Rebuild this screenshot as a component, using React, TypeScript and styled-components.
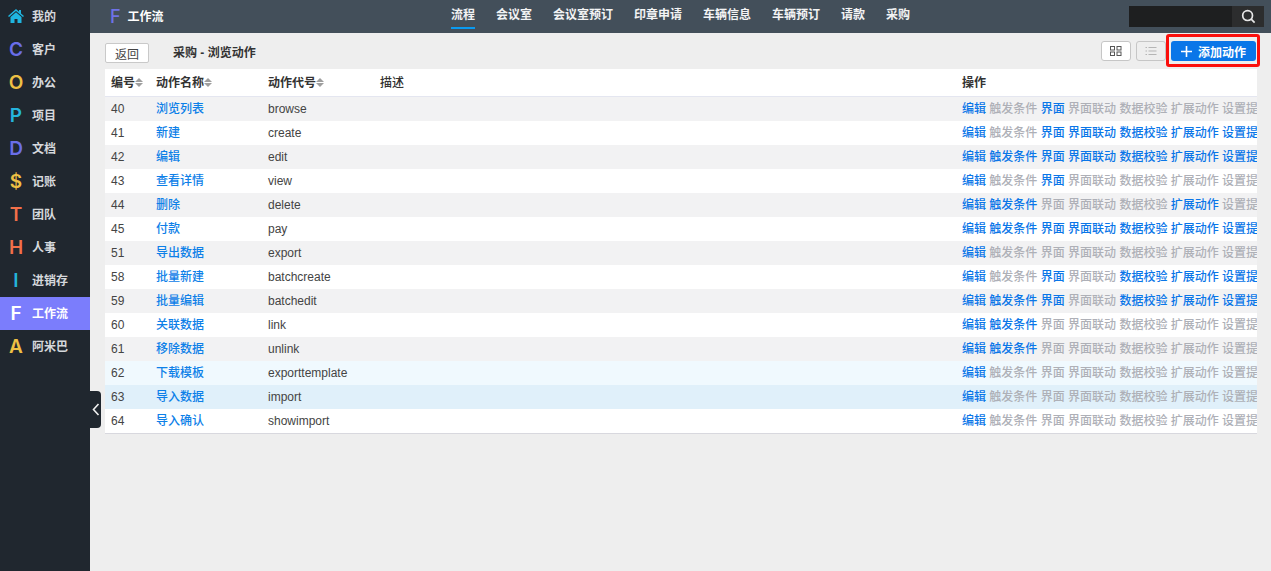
import React from 'react';
import styled, { createGlobalStyle } from 'styled-components';

const Global = createGlobalStyle`
  html, body { margin: 0; padding: 0; height: 100%; overflow: hidden; background: #eeeeee; }
  * { box-sizing: border-box; }
  body { font-family: "Liberation Sans", "Noto Sans CJK SC", sans-serif; font-size: 12px; color: #333; }
`;

const Page = styled.div`display: flex; width: 1271px; height: 571px; overflow: hidden;`;
const Sidebar = styled.aside`position: relative; width: 90px; flex: none; background: #20272f; display: flex; flex-direction: column;`;
const NavItem = styled.div<{ $active?: boolean }>`
  height: 33px; display: flex; align-items: center; padding-left: 8px; gap: 8px;
  font-weight: 700; color: ${p => (p.$active ? '#fff' : '#d5d8dc')};
  background: ${p => (p.$active ? '#7b7dfc' : 'transparent')};
`;
const NavLabel = styled.span`padding-bottom: 2px;`;
const NavIcon = styled.span<{ $color: string }>`
  width: 16px; font-size: 19px; line-height: 1; font-weight: 600;
  color: ${p => p.$color}; font-family: Inter, "Liberation Sans", sans-serif;
  display: flex; justify-content: center; padding-bottom: 1px;
`;
const Collapse = styled.div`
  position: absolute; left: 90px; top: 391px; width: 11px; height: 37px; background: #20272f;
  border-radius: 0 4px 4px 0; display: flex; align-items: center; justify-content: center;
`;
const Main = styled.main`flex: 1; min-width: 0; display: flex; flex-direction: column;`;
const TopBar = styled.header`height: 33px; flex: none; background: #434f5a; display: flex; align-items: center; position: relative;`;
const Brand = styled.div`display: flex; align-items: center; gap: 7px; padding-left: 20px; color: #fff; font-weight: 700;`;
const BrandMark = styled.span`color: #6f72e6; font-size: 18px; font-weight: 500; line-height: 1; font-family: Inter, sans-serif;`;
const BrandName = styled.span`padding-bottom: 2px;`;
const Tabs = styled.nav`position: absolute; left: 361px; top: 0; height: 33px; display: flex; gap: 21px;`;
const Tab = styled.span<{ $active?: boolean }>`
  height: 29px; line-height: 31px; color: #f2f3f4; font-weight: 700;
  border-bottom: 2px solid ${p => (p.$active ? '#0a9af0' : 'transparent')};
`;
const Search = styled.div`position: absolute; left: 1039px; top: 6px; display: flex; height: 21px;`;
const SearchInput = styled.div`width: 103px; background: #1e1f20;`;
const SearchBtn = styled.div`width: 32px; background: #2c2d2e; display: flex; align-items: center; justify-content: center;`;
const Content = styled.div`flex: 1; padding: 10px 14px 0 15px;`;
const Toolbar = styled.div`height: 26px; display: flex; align-items: flex-start;`;
const BackBtn = styled.button`
  width: 44px; height: 20px; padding: 0; background: #fff; border: 1px solid #c9c9c9; border-radius: 2px;
  color: #444; font: inherit;
`;
const Crumb = styled.div`margin-left: 24px; line-height: 20px; font-weight: 700; color: #333;`;
const Right = styled.div`margin: -2px 1px 0 auto; display: flex; align-items: center; gap: 5px;`;
const ViewBtn = styled.button<{ $off?: boolean }>`
  width: 30px; height: 20px; padding: 0; display: flex; align-items: center; justify-content: center;
  border: 1px solid #c6c6c6; border-radius: 3px; background: ${p => (p.$off ? '#eeeeee' : '#fff')};
`;
const AddBtn = styled.button`
  position: relative; width: 85px; height: 20px; padding: 0; border: 0; border-radius: 3px;
  background: #0a76e8; color: #fff; font: inherit; font-weight: 700;
  display: flex; align-items: center; justify-content: center; gap: 6px;
  &::after {
    content: ""; position: absolute; left: -5px; right: -4px; top: -7px; bottom: -6px;
    border: 3px solid #fb0f0c; border-radius: 3px;
  }
`;
const Table = styled.div`background: #fff; width: 1152px; box-shadow: 0 1px 0 #d8d8de; overflow: hidden;`;
const Grid = styled.div`display: grid; grid-template-columns: 45px 112px 112px 582px 1fr; align-items: center;`;
const Head = styled(Grid)`height: 28px; font-weight: 700; border-bottom: 1px solid #e4e6f0; color: #333;`;
const Row = styled(Grid)<{ $bg: string }>`height: 24px; background: ${p => p.$bg}; color: #444;`;
const Cell = styled.div`padding-left: 6px; white-space: nowrap; overflow: hidden;`;
const HeadCell = styled(Cell)`display: flex; align-items: center; padding-bottom: 2px;`;
const PlainHeadCell = styled(HeadCell)`font-weight: 500;`;
const NameCell = styled(Cell)`padding-bottom: 3px;`;
const Sort = styled.span`
  display: inline-flex; flex-direction: column; gap: 1px; margin-top: 1px;
  &::before, &::after { content: ""; width: 0; height: 0; border-left: 4px solid transparent; border-right: 4px solid transparent; }
  &::before { border-bottom: 4px solid #9e9e9e; }
  &::after { border-top: 4px solid #9e9e9e; }
`;
const NameLink = styled.a`color: #0d80e8; font-weight: 500;`;
const Actions = styled(Cell)`display: flex; gap: 3.33px; overflow: hidden; white-space: nowrap; padding-bottom: 3px; font-weight: 500;`;
const Action = styled.a<{ $on?: boolean }>`color: ${p => (p.$on ? '#0a76e8' : '#aeb0b7')}; flex: none;`;

const SearchIcon = () => (
  <svg width="15" height="15" viewBox="0 0 15 15" fill="none" stroke="#e8e8e8" strokeWidth="1.7"><circle cx="6.6" cy="6.6" r="4.9" /><path d="M10.2 10.2 13.6 13.6" /></svg>
);
const GridIcon = () => (
  <svg width="12" height="10" viewBox="0 0 12 10" fill="none" stroke="#555" strokeWidth="1"><rect x=".5" y=".5" width="4" height="3.5" /><rect x="7" y=".5" width="4" height="3.5" /><rect x=".5" y="6" width="4" height="3.5" /><rect x="7" y="6" width="4" height="3.5" /></svg>
);
const ListIcon = () => (
  <svg width="12" height="10" viewBox="0 0 12 10" fill="none" stroke="#b5b5b5" strokeWidth="1"><path d="M3.5 1.5H11.5M3.5 5H11.5M3.5 8.5H11.5M.5 1.5H2M.5 5H2M.5 8.5H2" /></svg>
);
const PlusIcon = () => (
  <svg width="11" height="11" viewBox="0 0 11 11" stroke="#fff" strokeWidth="1.6"><path d="M5.5 0V11M0 5.5H11" /></svg>
);
const HomeIcon = () => (
  <svg width="16" height="14" viewBox="0 0 16 14" fill="#1fb5e0"><path d="M8 0 0 7l1 1 7-6 7 6 1-1-3-2.6V1h-2v1.7L8 0Z" /><path d="M8 3.3 2.5 8v6h4V10h3v4h4V8L8 3.3Z" /></svg>
);
const Chevron = () => (
  <svg width="8" height="13" viewBox="0 0 8 13" fill="none" stroke="#f0f0f0" strokeWidth="1.6"><path d="M6.5 1 1.5 6.5 6.5 12" /></svg>
);

const navs: { icon: React.ReactNode; color: string; label: string; active?: boolean }[] = [
  { icon: <HomeIcon />, color: '#1fb5e0', label: '我的' },
  { icon: 'C', color: '#6a6ee8', label: '客户' },
  { icon: 'O', color: '#eec044', label: '办公' },
  { icon: 'P', color: '#25b3dc', label: '项目' },
  { icon: 'D', color: '#6a6ee8', label: '文档' },
  { icon: '$', color: '#eec044', label: '记账' },
  { icon: 'T', color: '#f2704a', label: '团队' },
  { icon: 'H', color: '#f2704a', label: '人事' },
  { icon: 'I', color: '#25b3dc', label: '进销存' },
  { icon: 'F', color: '#ffffff', label: '工作流', active: true },
  { icon: 'A', color: '#eec044', label: '阿米巴' },
];

const tabs = ['流程', '会议室', '会议室预订', '印章申请', '车辆信息', '车辆预订', '请款', '采购'];
const actionNames = ['触发条件', '界面', '界面联动', '数据校验', '扩展动作', '设置提醒'];

const rows: { id: number; name: string; code: string; flags: string; bg?: string }[] = [
  { id: 40, name: '浏览列表', code: 'browse', flags: '010000' },
  { id: 41, name: '新建', code: 'create', flags: '011111' },
  { id: 42, name: '编辑', code: 'edit', flags: '111111' },
  { id: 43, name: '查看详情', code: 'view', flags: '010000' },
  { id: 44, name: '删除', code: 'delete', flags: '100010' },
  { id: 45, name: '付款', code: 'pay', flags: '111111' },
  { id: 51, name: '导出数据', code: 'export', flags: '000000' },
  { id: 58, name: '批量新建', code: 'batchcreate', flags: '010111' },
  { id: 59, name: '批量编辑', code: 'batchedit', flags: '110111' },
  { id: 60, name: '关联数据', code: 'link', flags: '100000' },
  { id: 61, name: '移除数据', code: 'unlink', flags: '100000' },
  { id: 62, name: '下载模板', code: 'exporttemplate', flags: '000000', bg: '#f0f9fe' },
  { id: 63, name: '导入数据', code: 'import', flags: '000000', bg: '#e0f0fa' },
  { id: 64, name: '导入确认', code: 'showimport', flags: '000000', bg: '#ffffff' },
];

export default function App() {
  return (
    <Page>
      <Global />
      <Sidebar>
        {navs.map(n => (
          <NavItem key={n.label} $active={n.active}>
            <NavIcon $color={n.color}>{n.icon}</NavIcon>
            <NavLabel>{n.label}</NavLabel>
          </NavItem>
        ))}
        <Collapse><Chevron /></Collapse>
      </Sidebar>
      <Main>
        <TopBar>
          <Brand><BrandMark>F</BrandMark><BrandName>工作流</BrandName></Brand>
          <Tabs>
            {tabs.map((t, i) => <Tab key={t} $active={i === 0}>{t}</Tab>)}
          </Tabs>
          <Search><SearchInput /><SearchBtn><SearchIcon /></SearchBtn></Search>
        </TopBar>
        <Content>
          <Toolbar>
            <BackBtn>返回</BackBtn>
            <Crumb>采购 - 浏览动作</Crumb>
            <Right>
              <ViewBtn><GridIcon /></ViewBtn>
              <ViewBtn $off><ListIcon /></ViewBtn>
              <AddBtn><PlusIcon />添加动作</AddBtn>
            </Right>
          </Toolbar>
          <Table>
            <Head>
              <HeadCell>编号<Sort /></HeadCell>
              <HeadCell>动作名称<Sort /></HeadCell>
              <HeadCell>动作代号<Sort /></HeadCell>
              <PlainHeadCell>描述</PlainHeadCell>
              <HeadCell>操作</HeadCell>
            </Head>
            {rows.map((r, i) => (
              <Row key={r.id} $bg={r.bg ?? (i % 2 === 0 ? '#f2f2f3' : '#ffffff')}>
                <Cell>{r.id}</Cell>
                <NameCell><NameLink>{r.name}</NameLink></NameCell>
                <Cell>{r.code}</Cell>
                <Cell />
                <Actions>
                  <Action $on>编辑</Action>
                  {actionNames.map((a, k) => <Action key={a} $on={r.flags[k] === '1'}>{a}</Action>)}
                </Actions>
              </Row>
            ))}
          </Table>
        </Content>
      </Main>
    </Page>
  );
}
